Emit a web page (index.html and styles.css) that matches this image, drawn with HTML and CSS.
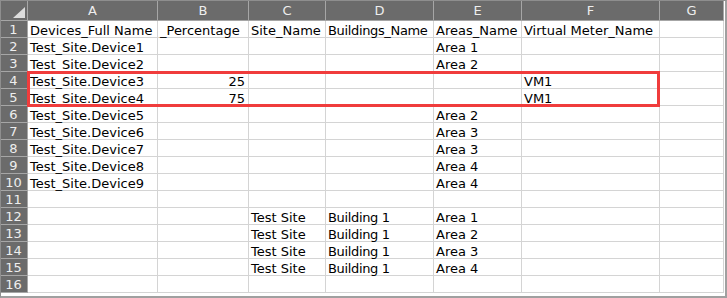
FILE: index.html
```html
<!DOCTYPE html>
<html>
<head>
<meta charset="utf-8">
<link rel="stylesheet" href="styles.css">
</head>
<body>
<div class="sheet">
  <div class="grid">
    <div class="row">
      <div class="corner"><svg width="27" height="20" viewBox="0 0 27 20"><polygon points="12,17 24,17 24,6" fill="#dcdcdc"/></svg></div>
      <div class="ch">A</div><div class="ch">B</div><div class="ch">C</div><div class="ch">D</div><div class="ch">E</div><div class="ch">F</div><div class="ch">G</div>
    </div>
    <div class="row">
      <div class="rh">1</div><div class="c">Devices_Full Name</div><div class="c">_Percentage</div><div class="c">Site_Name</div><div class="c tight">Buildings_Name</div><div class="c">Areas_Name</div><div class="c">Virtual Meter_Name</div><div class="c"></div>
    </div>
    <div class="row">
      <div class="rh">2</div><div class="c">Test_Site.Device1</div><div class="c"></div><div class="c"></div><div class="c"></div><div class="c">Area 1</div><div class="c"></div><div class="c"></div>
    </div>
    <div class="row">
      <div class="rh">3</div><div class="c">Test_Site.Device2</div><div class="c"></div><div class="c"></div><div class="c"></div><div class="c">Area 2</div><div class="c"></div><div class="c"></div>
    </div>
    <div class="row">
      <div class="rh">4</div><div class="c">Test_Site.Device3</div><div class="c num">25</div><div class="c"></div><div class="c"></div><div class="c"></div><div class="c">VM1</div><div class="c"></div>
    </div>
    <div class="row">
      <div class="rh">5</div><div class="c">Test_Site.Device4</div><div class="c num">75</div><div class="c"></div><div class="c"></div><div class="c"></div><div class="c">VM1</div><div class="c"></div>
    </div>
    <div class="row">
      <div class="rh">6</div><div class="c">Test_Site.Device5</div><div class="c"></div><div class="c"></div><div class="c"></div><div class="c">Area 2</div><div class="c"></div><div class="c"></div>
    </div>
    <div class="row">
      <div class="rh">7</div><div class="c">Test_Site.Device6</div><div class="c"></div><div class="c"></div><div class="c"></div><div class="c">Area 3</div><div class="c"></div><div class="c"></div>
    </div>
    <div class="row">
      <div class="rh">8</div><div class="c">Test_Site.Device7</div><div class="c"></div><div class="c"></div><div class="c"></div><div class="c">Area 3</div><div class="c"></div><div class="c"></div>
    </div>
    <div class="row">
      <div class="rh">9</div><div class="c">Test_Site.Device8</div><div class="c"></div><div class="c"></div><div class="c"></div><div class="c">Area 4</div><div class="c"></div><div class="c"></div>
    </div>
    <div class="row">
      <div class="rh">10</div><div class="c">Test_Site.Device9</div><div class="c"></div><div class="c"></div><div class="c"></div><div class="c">Area 4</div><div class="c"></div><div class="c"></div>
    </div>
    <div class="row">
      <div class="rh">11</div><div class="c"></div><div class="c"></div><div class="c"></div><div class="c"></div><div class="c"></div><div class="c"></div><div class="c"></div>
    </div>
    <div class="row">
      <div class="rh">12</div><div class="c"></div><div class="c"></div><div class="c">Test Site</div><div class="c tight">Building 1</div><div class="c">Area 1</div><div class="c"></div><div class="c"></div>
    </div>
    <div class="row">
      <div class="rh">13</div><div class="c"></div><div class="c"></div><div class="c">Test Site</div><div class="c tight">Building 1</div><div class="c">Area 2</div><div class="c"></div><div class="c"></div>
    </div>
    <div class="row">
      <div class="rh">14</div><div class="c"></div><div class="c"></div><div class="c">Test Site</div><div class="c tight">Building 1</div><div class="c">Area 3</div><div class="c"></div><div class="c"></div>
    </div>
    <div class="row">
      <div class="rh">15</div><div class="c"></div><div class="c"></div><div class="c">Test Site</div><div class="c tight">Building 1</div><div class="c">Area 4</div><div class="c"></div><div class="c"></div>
    </div>
    <div class="row">
      <div class="rh">16</div><div class="c"></div><div class="c"></div><div class="c"></div><div class="c"></div><div class="c"></div><div class="c"></div><div class="c"></div>
    </div>
  </div>
  <div class="highlight"></div>
</div>
</body>
</html>
```

FILE: styles.css
```css
html, body {
  margin: 0;
  padding: 0;
  background: #ffffff;
}

.sheet {
  position: relative;
  width: 727px;
  height: 298px;
  box-sizing: border-box;
  border-top: 1px solid #8e8e8e;
  border-left: 1px solid #8e8e8e;
  border-right: 2px solid #a0a0a0;
  border-bottom: 2px solid #a0a0a0;
  padding-right: 1px;
  overflow: hidden;
  font-family: "DejaVu Sans", Verdana, sans-serif;
  font-size: 13px;
  color: #000000;
}

.grid {
  display: grid;
  grid-template-columns: 27px 130px 91px 77px 108px 88px 138px 64px;
  grid-template-rows: 20px repeat(16, 17px);
}

.row {
  display: contents;
}

.corner, .ch, .rh {
  background: #6b6b6b;
  color: #eeeeee;
  box-sizing: border-box;
}

.corner {
  border-right: 1px solid #a6a6a6;
  border-bottom: 1px solid #a6a6a6;
}

.corner svg {
  display: block;
}

.ch {
  border-right: 1px solid #a6a6a6;
  border-bottom: 1px solid #a6a6a6;
  text-align: center;
  line-height: 19px;
}

.rh {
  border-right: 1px solid #a6a6a6;
  border-bottom: 1px solid #a6a6a6;
  text-align: center;
  line-height: 16px;
  padding-top: 1px;
  padding-right: 1px;
}

.c {
  box-sizing: border-box;
  border-right: 1px solid #d4d4d4;
  border-bottom: 1px solid #d4d4d4;
  padding: 2px 3px 0 2px;
  line-height: 16px;
  white-space: nowrap;
}

.c.tight {
  letter-spacing: -0.35px;
}

.c.num {
  text-align: right;
}

.highlight {
  position: absolute;
  left: 26px;
  top: 70px;
  width: 633px;
  height: 36px;
  box-sizing: border-box;
  border: 3px solid #f03c3c;
  pointer-events: none;
}
```
